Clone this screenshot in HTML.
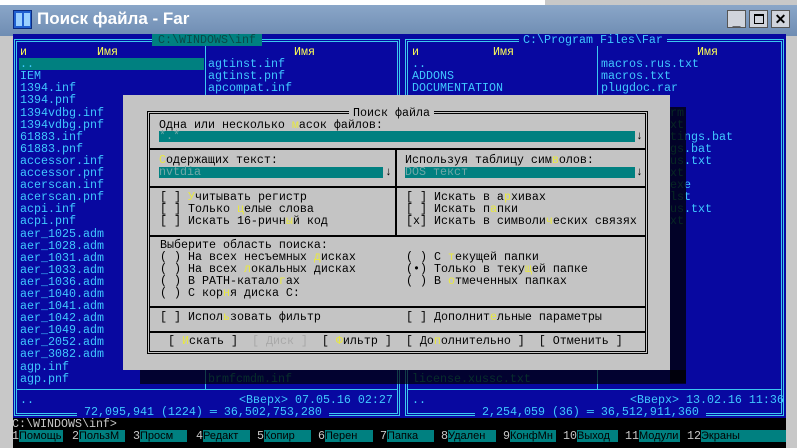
<!DOCTYPE html>
<html><head><meta charset="utf-8"><style>
*{margin:0;padding:0;box-sizing:border-box}
body{width:797px;height:448px;overflow:hidden;background:#c8c8c8;position:relative;font-family:"Liberation Mono","DejaVu Sans Mono",monospace}
.a{position:absolute;white-space:pre;font-size:11.67px;line-height:12.1px}
.tb{position:absolute;left:0;top:5px;width:797px;height:31px;background:linear-gradient(#8aa6c8,#6f8db3);}
.con{position:absolute;left:13px;top:34px;width:773px;height:414px;background:#000}
.pan{position:absolute;background:#0808a0}
.bd{position:absolute;border:3px double #3cc8f0}
.c{color:#40c8ff}.y{color:#ffff55}.k{color:#000}.g{color:#1a9a90}
.h{color:#e8e840}
.dlg{position:absolute;left:123px;top:95px;width:547px;height:275px;background:#c4c4c4}
.fr{position:absolute;border:3px double #000}
.ln{position:absolute;background:#000}
.inp{position:absolute;background:#008080;height:11px}
.kn{position:absolute;top:430px;font-size:11.67px;line-height:12px;color:#c8c8c8;white-space:pre}
.kl{position:absolute;top:430px;height:12px;background:#008080;color:#000;font-family:"Liberation Sans Narrow","Liberation Sans",sans-serif;font-size:11px;line-height:12px;white-space:pre}
</style></head><body>
<div style="position:absolute;left:0;top:0;width:545px;height:5px;background:#fff"></div>
<div class="tb"></div>
<div style="position:absolute;left:13px;top:10px;width:19px;height:19px;background:#2060d0;border:1px solid #0a2a80"><div style="position:absolute;left:2px;top:2px;width:6px;height:13px;background:#9ad0ff"></div><div style="position:absolute;left:10px;top:2px;width:6px;height:13px;background:#9ad0ff"></div></div>
<div style="position:absolute;left:37px;top:9px;font-family:'Liberation Sans',sans-serif;font-weight:bold;font-size:17px;color:#fff">Поиск файла - Far</div>
<div style="position:absolute;left:727px;top:10px;width:19px;height:18px;background:#d0d4dc;border:1px solid #555;font:bold 14px 'Liberation Sans';text-align:center;line-height:18px">_</div>
<div style="position:absolute;left:749px;top:10px;width:19px;height:18px;background:#d0d4dc;border:1px solid #555"><div style="position:absolute;left:4px;top:3px;width:10px;height:10px;border:1px solid #000;border-top-width:2px"></div></div>
<div style="position:absolute;left:771px;top:10px;width:19px;height:18px;background:#d0d4dc;border:1px solid #555;font:bold 14px 'Liberation Sans';text-align:center;line-height:16px">✕</div>

<div class="con">
 <div class="pan" style="left:0;top:0;width:389px;height:384px"></div>
 <div class="pan" style="left:389px;top:0;width:384px;height:384px"></div>
 <div class="bd" style="left:1px;top:5px;width:386px;height:377px"></div>
 <div class="bd" style="left:392px;top:5px;width:379px;height:377px"></div>
 <div class="ln" style="left:4px;top:355px;width:380px;height:1px;background:#3cc8f0"></div>
 <div class="ln" style="left:395px;top:355px;width:373px;height:1px;background:#3cc8f0"></div>
 <div class="ln" style="left:192px;top:12px;width:1px;height:343px;background:#3cc8f0"></div>
 <div class="ln" style="left:584px;top:12px;width:1px;height:343px;background:#3cc8f0"></div>
 <div class="a" style="left:139px;top:0;background:#008080;color:#0a4848;padding:0 6px">C:\WINDOWS\inf</div>
 <div class="a c" style="left:506px;top:0;background:#0808a0;padding:0 4px">C:\Program Files\Far</div>
 <div class="a y" style="left:7px;top:12.1px">и</div>
 <div class="a y" style="left:84px;top:12.1px">Имя</div>
 <div class="a y" style="left:281px;top:12.1px">Имя</div>
 <div class="a y" style="left:399px;top:12.1px">и</div>
 <div class="a y" style="left:480px;top:12.1px">Имя</div>
 <div class="a y" style="left:684px;top:12.1px">Имя</div>
 <div style="position:absolute;left:6px;top:24.2px;width:185px;height:12.1px;background:#008080"></div>
 <div class="a c" style="left:7px;top:24.2px">..
IEM
1394.inf
1394.pnf
1394vdbg.inf
1394vdbg.pnf
61883.inf
61883.pnf
accessor.inf
accessor.pnf
acerscan.inf
acerscan.pnf
acpi.inf
acpi.pnf
aer_1025.adm
aer_1028.adm
aer_1031.adm
aer_1033.adm
aer_1036.adm
aer_1040.adm
aer_1041.adm
aer_1042.adm
aer_1049.adm
aer_2052.adm
aer_3082.adm
agp.inf
agp.pnf</div>
 <div class="a c" style="left:195px;top:24.2px">agtinst.inf
agtinst.pnf
apcompat.inf</div>
 <div class="a g" style="left:195px;top:338.8px">brmfcmdm.inf</div>
 <div class="a c" style="left:399px;top:24.2px">..
ADDONS
DOCUMENTATION</div>
 <div class="a g" style="left:399px;top:338.8px">license.xussc.txt</div>
 <div class="a c" style="left:588px;top:24.2px">macros.rus.txt
macros.txt
plugdoc.rar</div>
 <div class="a c" style="left:657px;top:72.6px"><span class="g">rm</span>
<span class="g">xt</span>
<span class="g">ti</span>ngs.bat
<span class="g">gs</span>.bat
<span class="g">us</span>.txt
<span class="g">xt</span>
<span class="g">ex</span>e
<span class="g">ls</span>t
<span class="g">us</span>.txt
<span class="g">xt</span></div>
 <div style="position:absolute;left:127px;top:336px;width:546px;height:14px;background:rgba(0,0,0,.7)"></div>
 <div class="a c" style="left:7px;top:360px">..</div>
 <div class="a c" style="left:226px;top:360px">&lt;Вверх&gt; 07.05.16 02:27</div>
 <div class="a c" style="left:399px;top:360px">..</div>
 <div class="a c" style="left:617px;top:360px">&lt;Вверх&gt; 13.02.16 11:36</div>
 <div class="a c" style="left:64px;top:372px;background:#0808a0"> 72,095,941 (1224) ═ 36,502,753,280 </div>
 <div class="a c" style="left:462px;top:372px;background:#0808a0"> 2,254,059 (36) ═ 36,512,911,360 </div>
 <div class="a" style="left:-1px;top:384px;color:#c8c8c8">C:\WINDOWS\inf&gt;</div>
</div>
<div class="kn" style="left:12px">1</div><div class="kl" style="left:19px;width:44px">Помощь</div>
<div class="kn" style="left:72px">2</div><div class="kl" style="left:79px;width:46px">ПользМ</div>
<div class="kn" style="left:133px">3</div><div class="kl" style="left:140px;width:47px">Просм</div>
<div class="kn" style="left:196px">4</div><div class="kl" style="left:203px;width:47px">Редакт</div>
<div class="kn" style="left:257px">5</div><div class="kl" style="left:264px;width:47px">Копир</div>
<div class="kn" style="left:318px">6</div><div class="kl" style="left:325px;width:48px">Перен</div>
<div class="kn" style="left:380px">7</div><div class="kl" style="left:387px;width:47px">Папка</div>
<div class="kn" style="left:441px">8</div><div class="kl" style="left:448px;width:48px">Удален</div>
<div class="kn" style="left:503px">9</div><div class="kl" style="left:510px;width:46px">КонфМн</div>
<div class="kn" style="left:563px">10</div><div class="kl" style="left:577px;width:41px">Выход</div>
<div class="kn" style="left:625px">11</div><div class="kl" style="left:639px;width:41px">Модули</div>
<div class="kn" style="left:687px">12</div><div class="kl" style="left:701px;width:85px">Экраны</div>

<div class="dlg"></div>
<div class="fr" style="left:147px;top:111px;width:501px;height:243px"></div>
<div class="ln" style="left:150px;top:148px;width:495px;height:2px"></div>
<div class="ln" style="left:150px;top:186px;width:495px;height:2px"></div>
<div class="ln" style="left:150px;top:235px;width:495px;height:2px"></div>
<div class="ln" style="left:150px;top:306px;width:495px;height:2px"></div>
<div class="ln" style="left:150px;top:331px;width:495px;height:2px"></div>
<div class="ln" style="left:395px;top:148px;width:2px;height:88px"></div>
<div class="a k" style="left:349px;top:107px;background:#c4c4c4;padding:0 4px">Поиск файла</div>
<div class="a k" style="left:159px;top:119px">Одна или несколько <span class="h">м</span>асок файлов:</div>
<div class="inp" style="left:159px;top:131px;width:476px"></div>
<div class="a" style="left:159px;top:130px;color:#70a8a8">*.*</div>
<div class="a k" style="left:636px;top:130px">↓</div>
<div class="a k" style="left:159px;top:154px"><span class="h">С</span>одержащих текст:</div>
<div class="inp" style="left:159px;top:167px;width:224px"></div>
<div class="a" style="left:159px;top:166px;color:#70a8a8">nvtdia</div>
<div class="a k" style="left:385px;top:166px">↓</div>
<div class="a k" style="left:405px;top:154px">Используя таблицу сим<span class="h">в</span>олов:</div>
<div class="inp" style="left:405px;top:167px;width:230px"></div>
<div class="a" style="left:405px;top:166px;color:#70a8a8">DOS текст</div>
<div class="a k" style="left:636px;top:166px">↓</div>
<div class="a k" style="left:160px;top:191px">[ ] <span class="h">У</span>читывать регистр
[ ] Только <span class="h">ц</span>елые слова
[ ] Искать 16-ричн<span class="h">ы</span>й код</div>
<div class="a k" style="left:406px;top:191px">[ ] Искать в а<span class="h">р</span>хивах
[ ] Искать п<span class="h">а</span>пки
[x] Искать в символи<span class="h">ч</span>еских связях</div>
<div class="a k" style="left:160px;top:239px">Выберите область поиска:
( ) На всех несъемных <span class="h">д</span>исках
( ) На всех <span class="h">л</span>окальных дисках
( ) В PATH-катало<span class="h">г</span>ах
( ) С кор<span class="h">н</span>я диска C:</div>
<div class="a k" style="left:406px;top:251px">( ) С <span class="h">т</span>екущей папки
(•) Только в теку<span class="h">щ</span>ей папке
( ) В <span class="h">о</span>тмеченных папках</div>
<div class="a k" style="left:160px;top:311px">[ ] Испол<span class="h">ь</span>зовать фильтр</div>
<div class="a k" style="left:406px;top:311px">[ ] Дополнит<span class="h">е</span>льные параметры</div>
<div class="a k" style="left:168px;top:335px">[ <span class="h">И</span>скать ]  <span style="color:#a8a8a8">[ Диск ]</span>  [ <span class="h">Ф</span>ильтр ]  [ До<span class="h">п</span>олнительно ]  [ Отменить ]</div>
<div style="position:absolute;left:670px;top:107px;width:16px;height:276px;background:rgba(0,0,0,.75)"></div>
</body></html>
